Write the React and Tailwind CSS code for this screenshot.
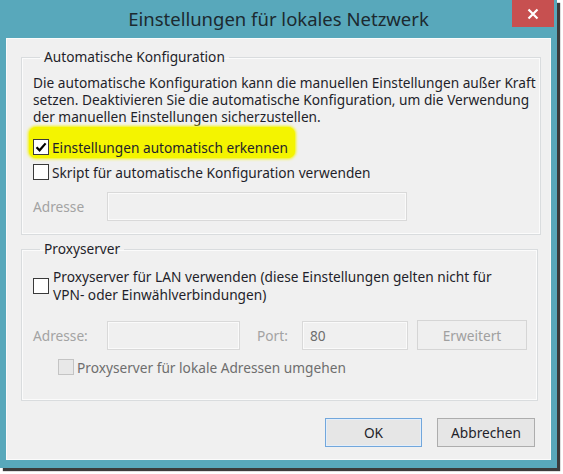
import React from 'react';

const Checkbox = ({ checked = false, disabled = false }) => (
  <span
    className={`w-[16px] h-[16px] shrink-0 border flex items-center justify-center ${
      disabled ? "border-[#c4c4c4] bg-[#e8e8e8]" : "border-[#3a3a3a] bg-white"
    }`}
  >
    {checked && (
      <svg width="12" height="12" viewBox="0 0 12 12">
        <path d="M1.5 6.2 L4.6 9.3 L10.6 2.4" fill="none" stroke="#000" strokeWidth="2.2" />
      </svg>
    )}
  </span>
);

const Input = ({ className = "", value = "" }) => (
  <div className={`h-[29px] border border-[#d9d9d9] bg-[#f0f0f0] shadow-[inset_0_0_0_1px_#fafafa] flex items-center px-[7px] text-[#6d6d6d] ${className}`}>
    {value}
  </div>
);

const Button = ({ children, primary = false, disabled = false, className = "" }) => {
  const base = "h-[29px] flex items-center justify-center border";
  const look = disabled
    ? "border-[#d5d5d5] bg-[#efefef] text-[#a0a0a0]"
    : primary
    ? "border-[#72a7dc] bg-[#e6e6e6] text-[#1f1f2a] shadow-[inset_0_0_0_1px_#e3eefa]"
    : "border-[#adadad] bg-[#e6e6e6] text-[#1f1f2a]";
  return <div className={`${base} ${look} ${className}`}>{children}</div>;
};

const Group = ({ title, children, className = "" }) => (
  <fieldset className={`border border-[#d9dcde] shadow-[inset_0_0_0_1px_#fbfbfb] pl-[11px] pr-[4px] flex flex-col items-start ${className}`}>
    <legend className="ml-[7px] px-[4px] leading-[20px] text-[#1f1f2a]">{title}</legend>
    {children}
  </fieldset>
);

export default function App() {
  return (
    <div
      className="w-[563px] h-[474px] bg-white text-[13.7px] leading-[17px] text-[#1f1f2a] whitespace-nowrap"
      style={{ fontFamily: '"Noto Sans", "Open Sans", sans-serif' }}
    >
      <div className="relative w-[557px] h-[468px] bg-[#58a8bb] shadow-[3px_3px_1px_#3b3b3b] flex flex-col">
        <div className="h-[38px] flex items-center justify-center pb-[2px] text-[18.5px] text-[#1c2a30]">
          Einstellungen für lokales Netzwerk
        </div>
        <div className="absolute top-0 right-[3px] w-[42px] h-[27px] bg-[#c75050] flex items-center justify-center">
          <svg width="12" height="12" viewBox="0 0 12 12">
            <path d="M1.5 1.5 L10.5 10.5 M10.5 1.5 L1.5 10.5" stroke="#fff" strokeWidth="2.2" />
          </svg>
        </div>

        <div className="mx-[6px] h-[422px] bg-[#f0f0f0] border border-[#fbfbfb] flex flex-col pt-[8px] pl-[14px] pr-[12px]">
          <Group title="Automatische Konfiguration" className="pb-[13px]">
            <p className="pt-[7px]">
              Die automatische Konfiguration kann die manuellen Einstellungen außer Kraft
              <br />
              setzen. Deaktivieren Sie die automatische Konfiguration, um die Verwendung
              <br />
              der manuellen Einstellungen sicherzustellen.
            </p>
            <div className="-ml-[4px] mt-[2px] pt-[11px] pb-[2px] pl-[4px] pr-[7px] bg-[#f4f400] rounded-[7px] shadow-[0_0_3px_1px_#f4f400]">
              <div className="flex items-center gap-[3px] h-[18px]">
                <Checkbox checked />
                <span>Einstellungen automatisch erkennen</span>
              </div>
            </div>
            <div className="flex items-center gap-[3px] h-[18px] mt-[5px]">
              <Checkbox />
              <span>Skript für automatische Konfiguration verwenden</span>
            </div>
            <div className="flex items-center mt-[11px]">
              <span className="w-[74px] text-[#a3a3a3]">Adresse</span>
              <Input className="w-[300px]" />
            </div>
          </Group>

          <Group title="Proxyserver" className="mt-[4px] pb-[24px]">
            <div className="flex items-center gap-[4px] pt-[9px]">
              <Checkbox />
              <span className="leading-[18px]">
                Proxyserver für LAN verwenden (diese Einstellungen gelten nicht für
                <br />
                VPN- oder Einwählverbindungen)
              </span>
            </div>
            <div className="flex items-center mt-[16px]">
              <span className="w-[74px] text-[#a3a3a3]">Adresse:</span>
              <Input className="w-[133px]" />
              <span className="w-[62px] pl-[17px] text-[#a3a3a3]">Port:</span>
              <Input className="w-[106px]" value="80" />
              <Button disabled className="ml-[9px] w-[110px] h-[30px]">Erweitert</Button>
            </div>
            <div className="flex items-center gap-[3px] h-[18px] mt-[8px] ml-[25px]">
              <Checkbox disabled />
              <span className="text-[#6e6e6e]">Proxyserver für lokale Adressen umgehen</span>
            </div>
          </Group>

          <div className="flex justify-end gap-[15px] mt-[17px] pr-[3px]">
            <Button primary className="w-[97px]">OK</Button>
            <Button className="w-[98px]">Abbrechen</Button>
          </div>
        </div>
      </div>
    </div>
  );
}
